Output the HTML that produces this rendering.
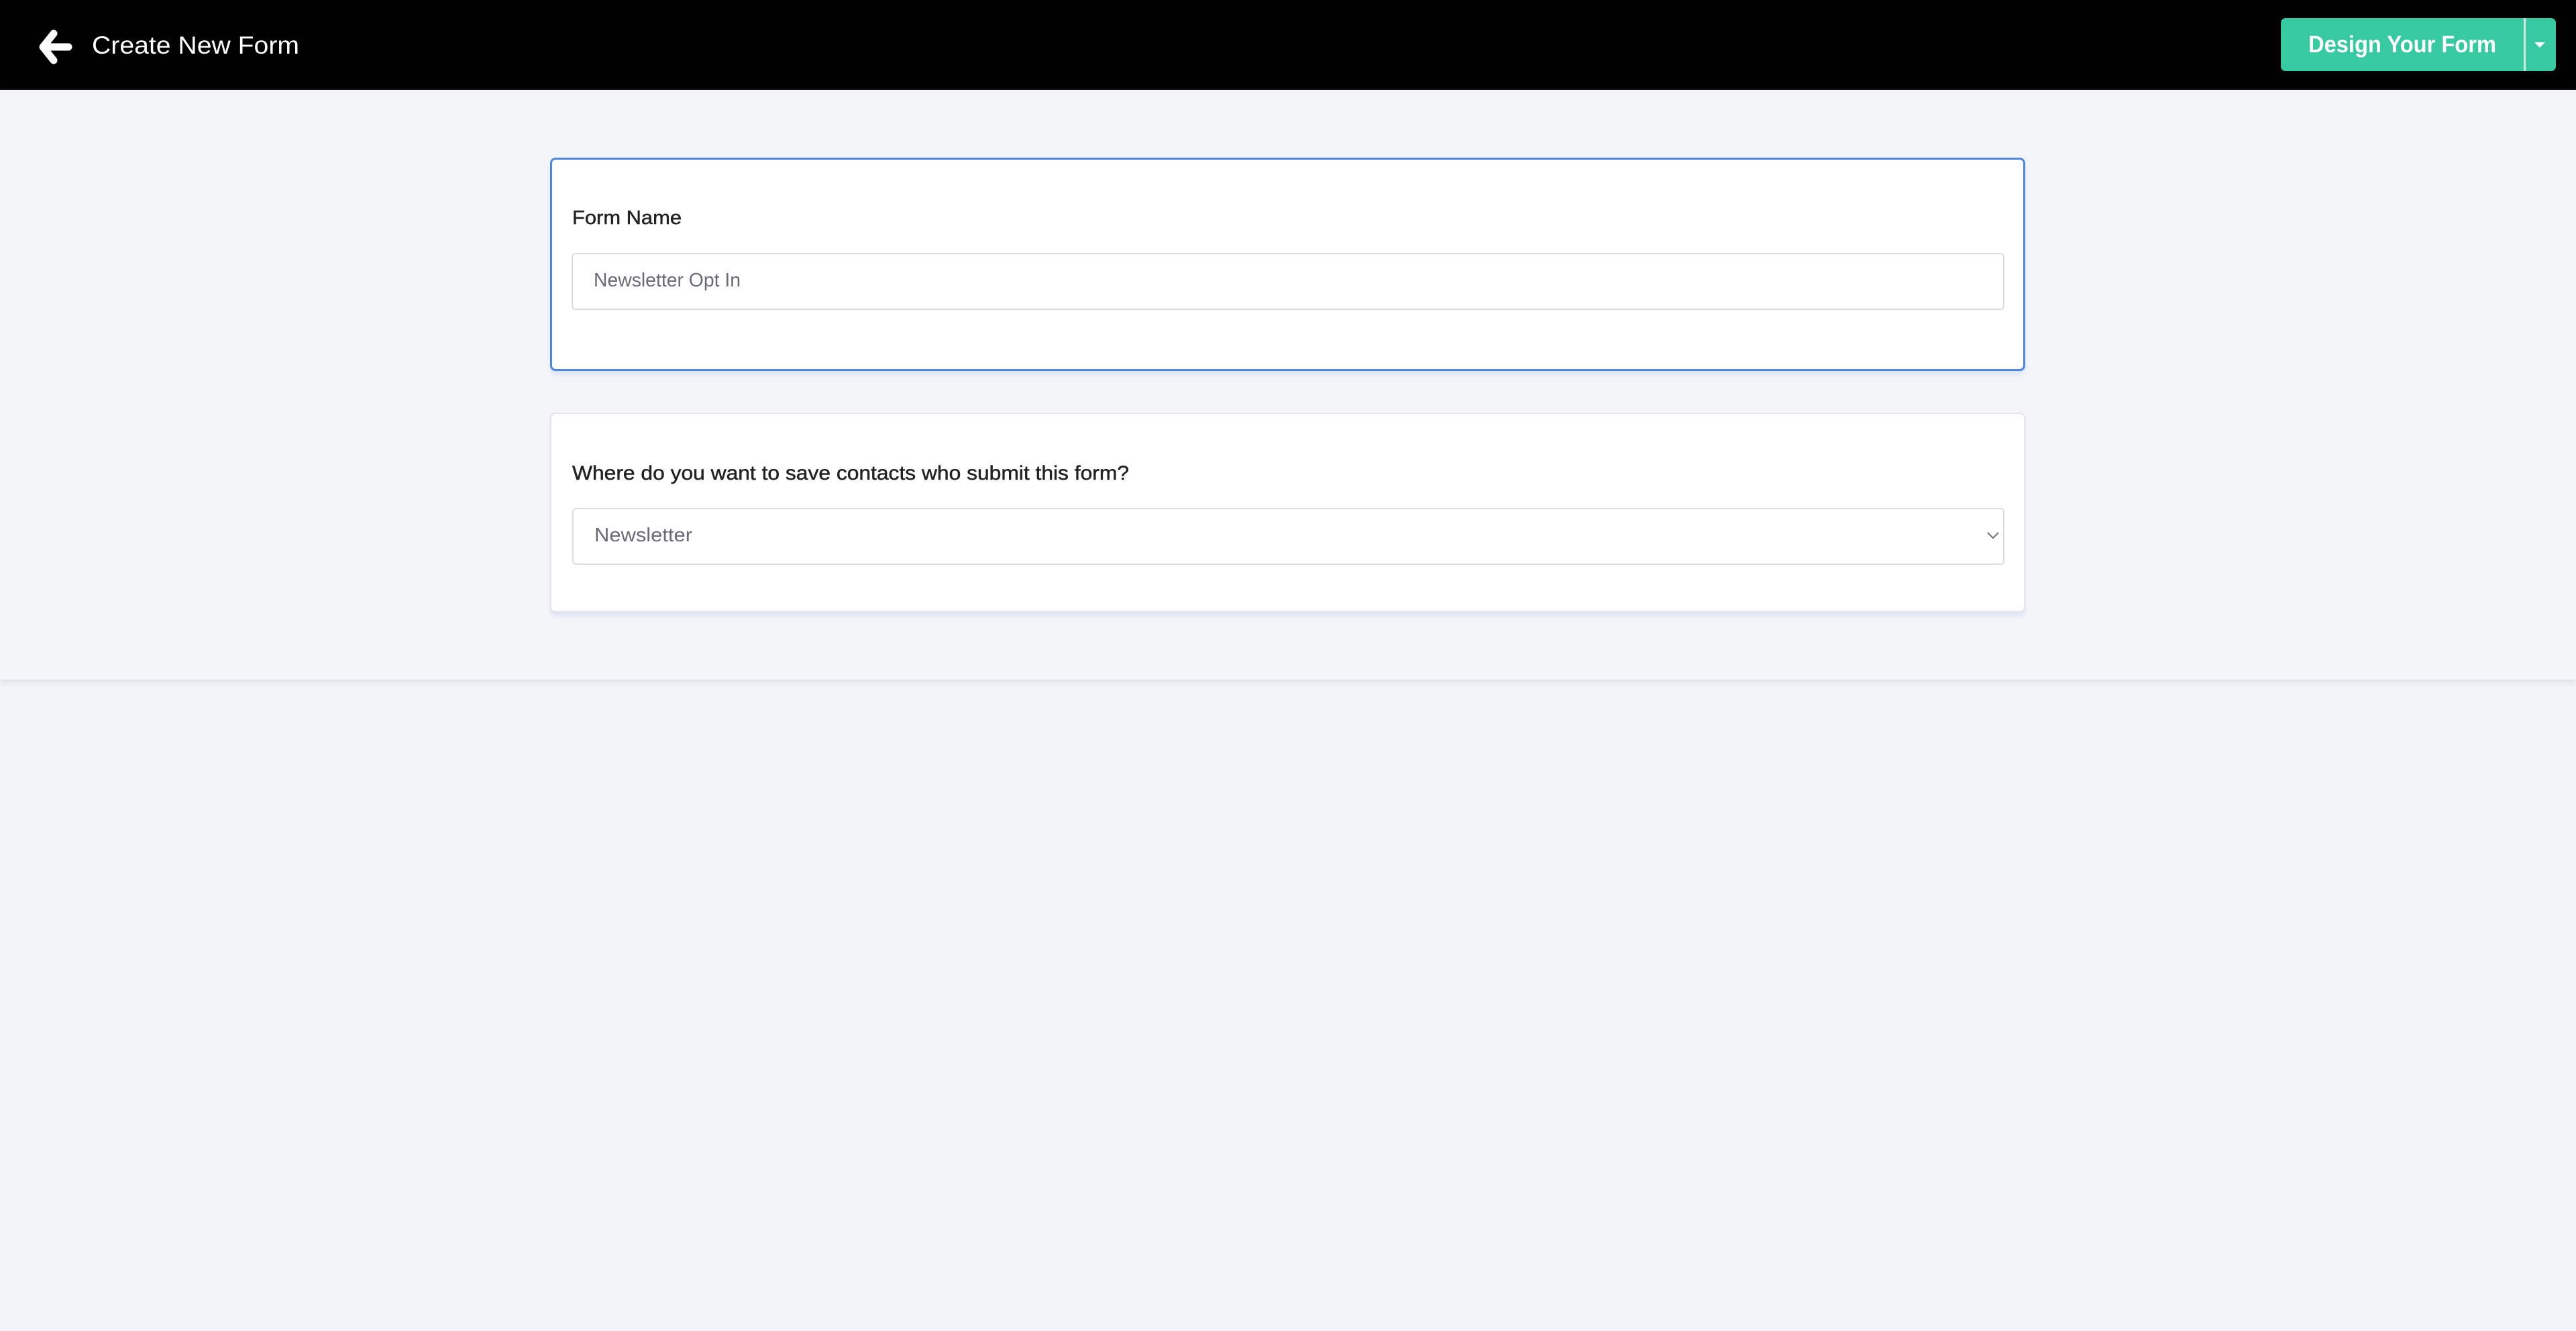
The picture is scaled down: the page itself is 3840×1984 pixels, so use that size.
<!DOCTYPE html>
<html><head><meta charset="utf-8"><style>
*{margin:0;padding:0;box-sizing:border-box}
html,body{width:3840px;height:1984px;overflow:hidden;background:#f2f3f8;font-family:"Liberation Sans",sans-serif}
.abs{position:absolute}
.t{position:absolute;white-space:nowrap;transform-origin:0 0;line-height:1}
#hdr{left:0;top:0;width:3840px;height:134px;background:#000}
#band{left:0;top:134px;width:3840px;height:879px;background:#f4f5f9;box-shadow:0 3px 8px rgba(190,196,220,.45)}
.card{position:absolute;background:#fff;border-radius:8px}
.inp{position:absolute;background:#fff;border:2px solid #dcdde2;border-radius:6px}
</style></head><body>
<div id="hdr" class="abs"></div>
<div id="band" class="abs"></div>

<svg class="abs" style="left:58px;top:44px" width="52" height="52" viewBox="0 0 52 52">
<path d="M22 6 L6 26 L22 46" fill="none" stroke="#fff" stroke-width="11" stroke-linecap="round" stroke-linejoin="round"/>
<path d="M10 26 L44 26" fill="none" stroke="#fff" stroke-width="11" stroke-linecap="round"/>
</svg>
<div class="t fit" style="left:137px;top:49px;font-size:37px;color:#fff" w="309">Create New Form</div>

<div class="abs" style="left:3400px;top:27px;width:410px;height:79px;background:#36c9a2;border-radius:7px"></div>
<div class="abs" style="left:3762px;top:27px;width:3px;height:79px;background:#d6e6e0"></div>
<div class="t fit" style="left:3441px;top:49px;font-size:35px;color:#fff;font-weight:bold" w="280">Design Your Form</div>
<svg class="abs" style="left:3778px;top:63px" width="16" height="9" viewBox="0 0 16 9"><path d="M0 0 L16 0 L8 8 Z" fill="#fff"/></svg>

<div class="card" style="left:820px;top:235px;width:2199px;height:318px;border:3px solid #4f87e0;box-shadow:0 6px 6px rgba(210,220,245,.6)"></div>
<div class="t fit" style="left:853px;top:311px;font-size:29px;color:#222;-webkit-text-stroke:.5px #222" w="163">Form Name</div>
<div class="inp" style="left:852px;top:377px;width:2136px;height:85px"></div>
<div class="t fit" style="left:885px;top:404px;font-size:29px;color:#686c75" w="219">Newsletter Opt In</div>

<div class="card" style="left:820px;top:615px;width:2199px;height:298px;border:2px solid #e3e5ea;box-shadow:0 6px 6px rgba(210,220,245,.6)"></div>
<div class="t fit" style="left:853px;top:691px;font-size:30px;color:#222;-webkit-text-stroke:.5px #222" w="830">Where do you want to save contacts who submit this form?</div>
<div class="inp" style="left:853px;top:757px;width:2135px;height:85px"></div>
<div class="t fit" style="left:886px;top:784px;font-size:29px;color:#686c75" w="146">Newsletter</div>
<svg class="abs" style="left:2962px;top:792px" width="18" height="12" viewBox="0 0 18 12"><path d="M1 2 L9 10 L17 2" fill="none" stroke="#6b6e75" stroke-width="2"/></svg>

<script>
document.querySelectorAll('.fit').forEach(function(e){
 var w=parseFloat(e.getAttribute('w'));var r=e.getBoundingClientRect().width;
 if(r>0)e.style.transform='scaleX('+(w/r)+')';
});
</script>
</body></html>
